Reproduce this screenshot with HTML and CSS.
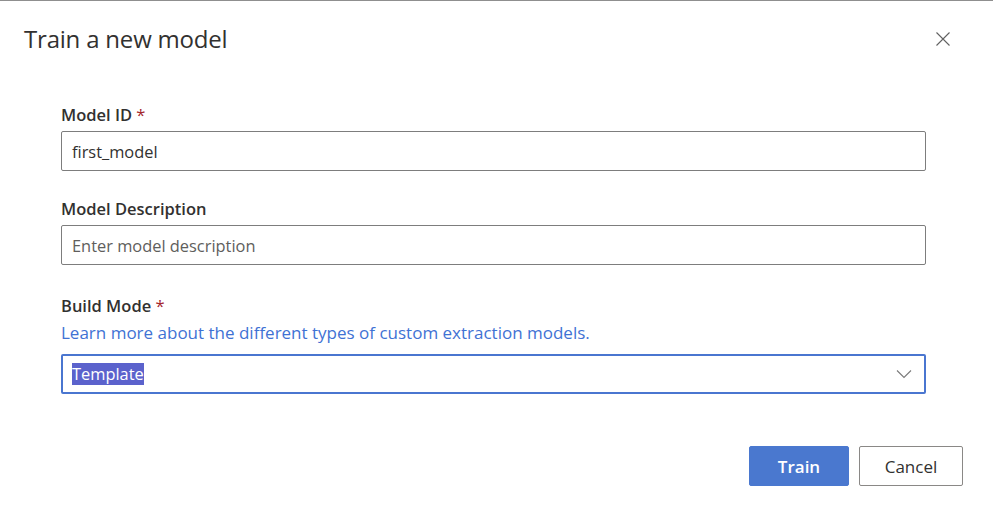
FILE: index.html
```html
<!DOCTYPE html>
<html lang="en">
<head>
<meta charset="utf-8">
<title>Train a new model</title>
<link rel="stylesheet" href="styles.css">
</head>
<body>
<div class="dialog">
  <header class="dialog-header">
    <h1 class="dialog-title">Train a new model</h1>
    <button class="close-btn" aria-label="Close">
      <svg width="16" height="16" viewBox="0 0 16 16"><path d="M1.5 1.5 L14.5 14.5 M14.5 1.5 L1.5 14.5" stroke="#616161" stroke-width="1.1" fill="none"/></svg>
    </button>
  </header>
  <form class="form">
    <div class="field">
      <label class="label">Model ID <span class="req">*</span></label>
      <div class="input"><span class="value">first_model</span></div>
    </div>
    <div class="field">
      <label class="label">Model Description</label>
      <div class="input"><span class="placeholder">Enter model description</span></div>
    </div>
    <div class="field field-build">
      <label class="label">Build Mode <span class="req">*</span></label>
      <a class="link" href="#">Learn more about the different types of custom extraction models.</a>
      <div class="select">
        <span class="selected">Template</span>
        <svg class="chevron" width="16" height="10" viewBox="0 0 16 10"><path d="M1 1.5 L8 8.5 L15 1.5" stroke="#7a7a7a" stroke-width="1.1" fill="none"/></svg>
      </div>
    </div>
  </form>
  <footer class="actions">
    <button class="btn btn-primary" type="button">Train</button>
    <button class="btn btn-default" type="button">Cancel</button>
  </footer>
</div>
</body>
</html>
```
FILE: styles.css
```css
* { box-sizing: border-box; }
html, body { margin: 0; padding: 0; background: #fff; }
body {
  font-family: "Segoe UI", "Open Sans", "Noto Sans", sans-serif;
  color: #323130;
  border-top: 1px solid #8f8f8f;
  width: 993px;
  height: 509px;
  overflow: hidden;
}
.dialog { display: flex; flex-direction: column; }
.dialog-header {
  display: flex;
  justify-content: space-between;
  align-items: center;
  padding: 22px 42px 0 24px;
}
.dialog-title {
  margin: 0;
  font-size: 24px;
  font-weight: 400;
  line-height: 32px;
  letter-spacing: -0.2px;
}
.close-btn {
  border: none;
  background: none;
  padding: 0;
  width: 16px;
  height: 16px;
  display: flex;
}
.form {
  display: flex;
  flex-direction: column;
  gap: 27px;
  padding: 49px 0 0 61px;
  width: 926px;
}
.field { display: flex; flex-direction: column; }
.field-build { margin-top: 3px; }
.label {
  font-size: 16.5px;
  font-weight: 600;
  line-height: 22px;
  margin-bottom: 5px;
}
.req { color: #a4262c; font-weight: 400; }
.input, .select {
  height: 40px;
  border: 1px solid #7d7d7d;
  border-radius: 2px;
  display: flex;
  align-items: center;
  padding: 0 10px;
  font-size: 16.4px;
}
.placeholder { color: #605e5c; }
.link {
  color: #3f72d4;
  text-decoration: none;
  font-size: 17px;
  line-height: 22px;
  margin-bottom: 10px;
  font-weight: 500;
}
.select {
  border: 2px solid #4a76d0;
  padding: 0 9px;
  justify-content: space-between;
}
.selected {
  background: #5b62cc;
  color: #fff;
  line-height: 22px;
}
.chevron { margin-right: 3px; }
.actions {
  display: flex;
  justify-content: flex-end;
  gap: 10px;
  padding: 52px 30px 0 0;
}
.btn {
  height: 40px;
  border-radius: 2px;
  font-family: inherit;
  font-size: 17px;
  font-weight: 600;
}
.btn-primary {
  width: 100px;
  background: #4a78cf;
  color: #fff;
  border: 1px solid #4a78cf;
}
.btn-default {
  width: 104px;
  background: #fff;
  color: #323130;
  border: 1px solid #8a8886;
  font-weight: 500;
}
```
